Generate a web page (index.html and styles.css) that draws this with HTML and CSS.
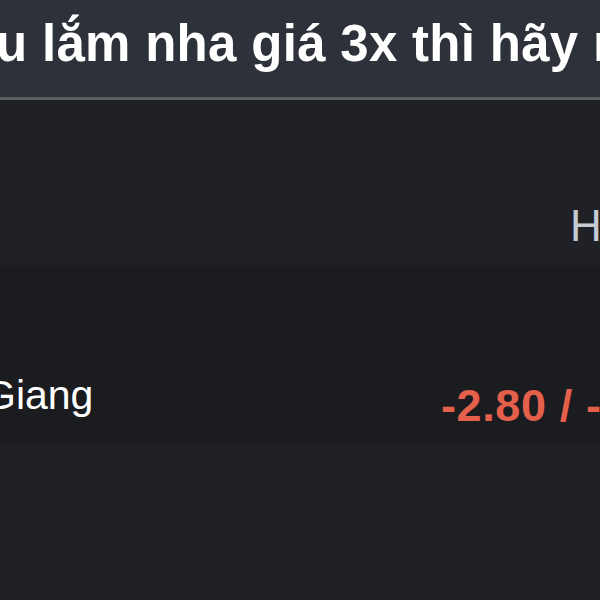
FILE: index.html
```html
<!DOCTYPE html>
<html lang="vi">
<head>
  <meta charset="UTF-8" />
  <meta name="viewport" content="width=device-width, initial-scale=1" />
  <title>Giá xăng</title>
  <link rel="stylesheet" href="styles.css">
</head>
<body>
  <header class="notice">
    <p class="notice-text">u lắm nha giá 3x thì hãy mua</p>
  </header>

  <main class="board">
    <div class="board-head">
      <span class="col-title">H</span>
    </div>
    <div class="board-row">
      <span class="region">Giang</span>
      <span class="change">-2.80 / -3.10</span>
    </div>
  </main>
</body>
</html>
```

FILE: styles.css
```css
html, body {
  margin: 0;
  height: 100%;
}
body {
  font-family: 'Liberation Sans', Arial, sans-serif;
  background: #202126;
  color: #fff;
  overflow: hidden;
}
.notice {
  height: 100px;
  box-sizing: border-box;
  background: #2d3139;
  border-bottom: 3px solid #5c5e63;
  padding-top: 18px;
  overflow: hidden;
}
.notice-text {
  margin: 0 0 0 -4px;
  font-size: 51px;
  line-height: 1;
  font-weight: 700;
  letter-spacing: 0.3px;
  white-space: nowrap;
}
.board-head {
  height: 165px;
  box-sizing: border-box;
  padding: 104px 0 0 570px;
  overflow: hidden;
  white-space: nowrap;
}
.col-title {
  display: block;
  font-size: 44px;
  line-height: 1;
  color: #c6cad2;
}
.board-row {
  height: 178px;
  box-sizing: border-box;
  background: #1b1c20;
  display: flex;
  white-space: nowrap;
  overflow: hidden;
  padding-top: 110px;
}
.region {
  display: block;
  margin-left: -16px;
  width: 457px;
  flex-shrink: 0;
  font-size: 41px;
  line-height: 1;
  color: #fff;
}
.change {
  display: block;
  flex-shrink: 0;
  margin-top: 8px;
  font-size: 45px;
  line-height: 1;
  font-weight: 700;
  letter-spacing: 0.6px;
  color: #e4604b;
}
```
